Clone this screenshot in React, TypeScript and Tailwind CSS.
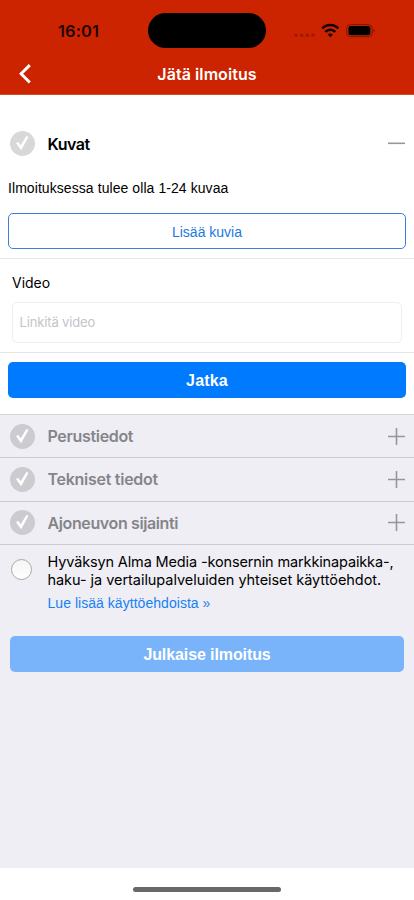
import React from "react";

const inter = "font-['Inter','Liberation_Sans',sans-serif]";
const helv = "font-['Liberation_Sans','Arial',sans-serif]";

function Check({ className }: { className: string }) {
  return (
    <svg width="25" height="25" viewBox="0.5 0.5 25 25" className={"shrink-0 " + className}>
      <circle cx="13" cy="13" r="12.5" fill="currentColor" />
      <path d="M6.5 12.8 L8.7 11.3 L11.2 14.8 L16.9 5.6 L19 6.3 L11.7 19.8 Z" fill="#fff" />
    </svg>
  );
}

function Row({ title, spacing }: { title: string; spacing: string }) {
  return (
    <div className="flex h-[43.3px] items-center border-b border-[#cbcbd0] pl-[10px] pr-[9.5px]">
      <Check className="text-[#cbcbd0]" />
      <span className={`ml-[12.5px] flex-1 whitespace-nowrap text-[16px] font-semibold leading-5 text-[#858589] ${spacing}`}>{title}</span>
      <svg width="17" height="17" viewBox="0 0 17 17" stroke="#97979b" strokeWidth="1.6">
        <path d="M0 8.5H17M8.5 0V17" />
      </svg>
    </div>
  );
}

export default function App() {
  return (
    <div className={`flex h-[900px] w-[414px] flex-col overflow-hidden bg-white text-black ${inter}`}>
      <header className="h-[95px] shrink-0 border-b border-[#d84b2d] bg-[#cc2400]">
        <div className="grid h-[61px] grid-cols-[148px_118px_148px] items-center">
          <span className="pl-[58px] text-[16.5px] font-semibold leading-5 tracking-[0.1px] text-[#260500]">16:01</span>
          <div className="h-[35px] rounded-full bg-black" />
          <div className="flex items-center pl-[28px]">
            <svg width="82" height="16" viewBox="0 0 82 16">
              <g fill="#9d1b00">
                <circle cx="2" cy="12.2" r="1.8" />
                <circle cx="7.7" cy="12.2" r="1.8" />
                <circle cx="13.3" cy="12.2" r="1.8" />
                <circle cx="19" cy="12.2" r="1.8" />
              </g>
              <g transform="translate(27.3 1)" fill="none" stroke="#160300" strokeWidth="2.6">
                <path d="M1 4.5C5-.1 13-.1 17 4.5" />
                <path d="M4 7.9C6.8 5 11.2 5 14 7.9" />
                <path d="M6.4 10.6C8 9.2 10 9.2 11.6 10.6L9 13.2Z" fill="#160300" stroke="none" />
              </g>
              <rect x="52.6" y="1.6" width="25.6" height="12.1" rx="3.8" fill="none" stroke="#811600" />
              <rect x="54.4" y="3.1" width="22" height="9.1" rx="2.3" fill="#000" />
              <path d="M79.6 5.8C81.3 6.3 81.3 9 79.6 9.5Z" fill="#811600" />
            </svg>
          </div>
        </div>
        <div className="grid h-[26px] grid-cols-[48px_1fr_48px] items-center">
          <svg width="12" height="20" viewBox="0 0 12 20" className="ml-[19px]" fill="none" stroke="#fff" strokeWidth="2.9">
            <path d="M10.8 1.1L2.1 9.8L10.8 18.5" />
          </svg>
          <h1 className="text-center text-[16px] font-semibold leading-5 tracking-[0.07px] text-white">Jätä ilmoitus</h1>
        </div>
      </header>

      <section className="flex h-[319px] shrink-0 flex-col">
        <div className="mt-[27px] flex h-[43px] items-center pl-[10px] pr-[9.5px]">
          <Check className="text-[#d8d8d8]" />
          <h2 className="ml-[12.5px] flex-1 text-[16px] font-semibold leading-5 tracking-[-0.5px]">Kuvat</h2>
          <svg width="17" height="17" viewBox="0 0 17 17" stroke="#97979b" strokeWidth="1.6">
            <path d="M0 8.3H17" />
          </svg>
        </div>
        <p className={`mt-[13px] px-2 text-[14px] leading-5 tracking-[0.07px] ${helv}`}>Ilmoituksessa tulee olla 1-24 kuvaa</p>
        <button className={`mx-2 mt-[15px] h-[36px] shrink-0 rounded-[5px] border border-[#3d7edb] pt-[2px] text-[14px] text-[#1c78e0] ${helv}`}>Lisää kuvia</button>
        <div className="mt-[9px] flex h-[94.5px] shrink-0 flex-col border-y border-[#e5e5ea] px-3">
          <label className="mt-[14px] text-[14px] leading-5">Video</label>
          <input placeholder="Linkitä video" className="mt-[8.5px] h-[41.5px] rounded-[5px] border border-[#efeff0] px-[6.5px] text-[13px] tracking-[-0.15px] placeholder:text-[#c4c4c8]" />
        </div>
        <button className={`mx-2 mt-[9px] h-[36px] shrink-0 rounded-[5px] bg-[#007aff] pt-[2px] text-[16px] font-bold tracking-[0.2px] text-white ${helv}`}>Jatka</button>
      </section>

      <main className="flex h-[454px] shrink-0 flex-col border-t border-[#d4d4d8] bg-[#efeef5]">
        <Row title="Perustiedot" spacing="tracking-[-0.33px]" />
        <Row title="Tekniset tiedot" spacing="tracking-[-0.27px]" />
        <Row title="Ajoneuvon sijainti" spacing="tracking-[-0.38px]" />
        <div className="mt-[8px] flex pl-[10.5px]">
          <div className="mt-[6px] size-[21px] shrink-0 rounded-full border border-[#aaa] bg-linear-to-b from-[#f5f5f5] to-white" />
          <div className="ml-[16px] whitespace-nowrap">
            <p className="text-[14.5px] leading-[18px] tracking-[-0.14px]">Hyväksyn Alma Media -konsernin markkinapaikka-,</p>
            <p className="text-[14.5px] leading-[18px] tracking-[-0.05px]">haku- ja vertailupalveluiden yhteiset käyttöehdot.</p>
            <a className={`mt-[4px] block text-[14px] leading-5 tracking-[0.04px] text-[#1680f5] ${helv}`}>Lue lisää käyttöehdoista »</a>
          </div>
        </div>
        <button className={`mx-[10px] mt-[23.5px] h-[35.5px] shrink-0 rounded-[5px] bg-[#79b4fb] pt-px text-[16px] font-bold tracking-[-0.1px] text-white ${helv}`}>Julkaise ilmoitus</button>
      </main>

      <footer className="flex h-8 shrink-0 justify-center pt-[19px]">
        <div className="h-[5px] w-[148px] rounded-full bg-[#686868]" />
      </footer>
    </div>
  );
}
